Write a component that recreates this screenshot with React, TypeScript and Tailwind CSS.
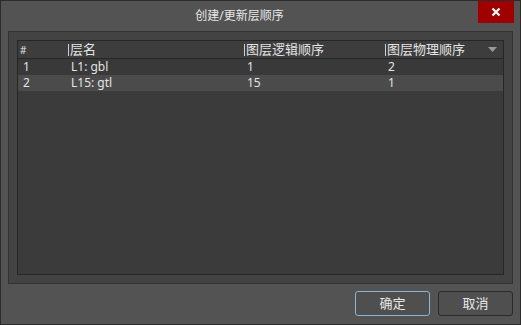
import React from 'react';

const rows = [
  { no: '1', name: 'L1: gbl', logic: '1', phys: '2' },
  { no: '2', name: 'L15: gtl', logic: '15', phys: '1' },
];

export default function App() {
  return (
    <div
      className="w-[521px] h-[325px] bg-[#535353] border border-[#2b2b2b] flex flex-col text-[#e4e4e4] overflow-hidden"
      style={{ fontFamily: '"Noto Sans", "Noto Sans CJK SC", sans-serif' }}
    >
      {/* title bar */}
      <div className="h-[30px] flex shrink-0">
        <div className="flex-1 flex items-center justify-center text-[12px] pb-[1px] text-[#e8e8e8]">创建/更新层顺序</div>
        <button className="mr-[6px] w-[36px] h-[22px] bg-[#a00000] flex items-center justify-center">
          <svg width="10" height="10" viewBox="0 0 10 10">
            <path d="M1.5 1.5 L8.5 8.5 M8.5 1.5 L1.5 8.5" stroke="#fff" strokeWidth="2.2" />
          </svg>
        </button>
      </div>

      {/* panel */}
      <div className="mx-[7px] h-[253px] bg-[#434343] border border-[#333333] p-[8px] shrink-0">
        <div className="h-full bg-[#3b3b3b] border border-[#262626] flex flex-col">
          <div className="h-[18px] flex items-center text-[13px] border-b border-[#262626] bg-[#3d3d3d] leading-none">
            <div className="w-[50px] pl-[2px] text-[10px]">#</div>
            <div className="w-[176px] flex items-center gap-[1px]">
              <span className="w-[1px] h-[12px] bg-[#cfcfcf]" />
              <span>层名</span>
            </div>
            <div className="w-[141px] flex items-center gap-[1px]">
              <span className="w-[1px] h-[12px] bg-[#cfcfcf]" />
              <span>图层逻辑顺序</span>
            </div>
            <div className="flex-1 flex items-center gap-[1px]">
              <span className="w-[1px] h-[12px] bg-[#cfcfcf]" />
              <span className="flex-1">图层物理顺序</span>
              <svg width="9" height="5" viewBox="0 0 9 5" className="mr-[6px]">
                <path d="M0 0 H9 L4.5 5 Z" fill="#9a9a9a" />
              </svg>
            </div>
          </div>
          {rows.map((r, i) => (
            <div
              key={r.no}
              className={`h-[16px] flex items-center text-[12px] leading-none ${i === 1 ? 'bg-[#4b4b4b]' : 'bg-[#393939]'}`}
            >
              <div className="w-[50px] pl-[5px]">{r.no}</div>
              <div className="w-[176px] pl-[3px]">{r.name}</div>
              <div className="w-[141px] pl-[3px]">{r.logic}</div>
              <div className="flex-1 pl-[3px]">{r.phys}</div>
            </div>
          ))}
        </div>
      </div>

      {/* buttons */}
      <div className="flex justify-end gap-[8px] pr-[7px] pt-[7px]">
        <button className="w-[75px] h-[25px] rounded-[3px] border border-[#8db3d6] text-[13px] text-[#e8e8e8] bg-[#4f4f4f]">确定</button>
        <button className="w-[75px] h-[25px] rounded-[3px] border border-[#2a2a2a] text-[13px] text-[#e8e8e8] bg-[#4f4f4f]">取消</button>
      </div>
    </div>
  );
}
